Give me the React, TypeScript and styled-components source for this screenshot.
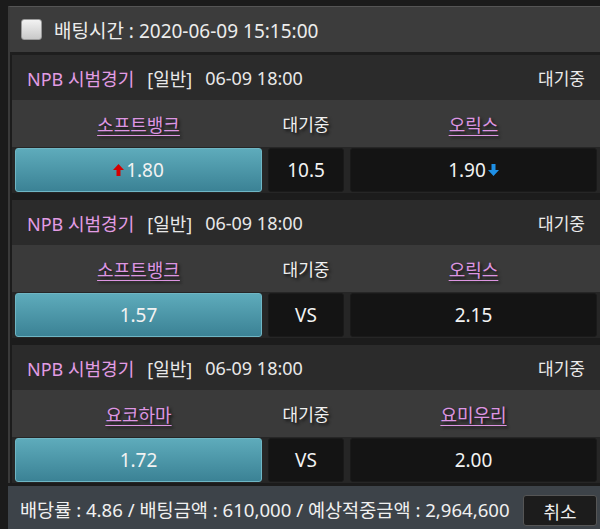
import React from "react";
import styled, { createGlobalStyle } from "styled-components";

const GlobalStyle = createGlobalStyle`
  html, body {
    margin: 0;
    padding: 0;
    background: #1b1b1b;
    overflow: hidden;
  }
  body {
    font-family: "Noto Sans", "Noto Sans CJK KR", sans-serif;
    color: #ececec;
  }
`;

const Page = styled.div`
  padding: 6px 0 0 8px;
  width: 600px;
  box-sizing: border-box;
`;

const Panel = styled.div`
  border-left: 2px solid #3a3a3a;
  border-top: 1px solid #555;
  background: #1c1c1c;
`;

const Header = styled.div`
  display: flex;
  align-items: center;
  gap: 12px;
  height: 45px;
  padding-left: 11px;
  background: #3c3c3c;
  border-bottom: 3px solid #1e1e1e;
  font-size: 19px;
`;

const CheckBox = styled.span`
  width: 21px;
  height: 21px;
  border-radius: 3px;
  border: 1px solid #9a9a9a;
  background: linear-gradient(#f2f2f2, #c9c9c9);
  box-sizing: border-box;
`;

const Games = styled.div`
  padding-left: 2px;
`;

const Game = styled.div`
  margin-bottom: 7px;

  &:last-child {
    margin-bottom: 3px;
  }
`;

const TitleRow = styled.div`
  display: flex;
  align-items: center;
  height: 45px;
  padding: 0 15px;
  background: #2b2b2b;
  font-size: 18px;
`;

const League = styled.span`
  color: #e29ce4;
  margin-right: 13px;
`;

const Plain = styled.span`
  color: #e8e8e8;
  margin-right: 13px;
`;

const Status = styled.span`
  margin-left: auto;
  font-size: 17px;
  color: #ececec;
`;

const Columns = styled.div`
  display: grid;
  grid-template-columns: 1fr 76px 1fr;
  column-gap: 6px;
  padding: 0 3px;
`;

const TeamRow = styled(Columns)`
  height: 47px;
  align-items: center;
  background: #3a3a3a;
  font-size: 18px;
  text-align: center;
`;

const Team = styled.span`
  color: #dd95e2;
  text-decoration: underline;
  text-decoration-thickness: 1px;
  text-underline-offset: 3px;
  text-shadow: 2px 2px 3px #111;
`;

const Draw = styled.span`
  color: #f0f0f0;
  font-size: 17px;
  text-shadow: 2px 2px 3px #111;
`;

const OddsRow = styled(Columns)`
  padding-top: 1px;
  padding-bottom: 1px;
  background: #262626;
`;

const OddsButton = styled.div<{ $selected?: boolean }>`
  display: flex;
  align-items: center;
  justify-content: center;
  gap: 2px;
  height: 44px;
  border-radius: 3px;
  font-size: 19px;
  color: #f2f2f2;
  box-sizing: border-box;
  background: ${(p) =>
    p.$selected ? "linear-gradient(#5eabbb, #3b8295)" : "#141414"};
  border: 1px solid ${(p) => (p.$selected ? "#6fb6c4" : "#1a1a1a")};
`;

const Footer = styled.div`
  display: flex;
  align-items: center;
  padding: 9px 3px 9px 12px;
  background: #3d4349;
  font-size: 18.6px;
  line-height: 1.2;
  color: #f0f0f0;
`;

const CancelButton = styled.button`
  margin-left: auto;
  width: 74px;
  height: 31px;
  border-radius: 3px;
  border: 1px solid #555;
  background: #1c1c1c;
  color: #eee;
  font-family: inherit;
  font-size: 18px;
  padding: 0;
`;

const Arrow = ({ dir }: { dir: "up" | "down" }) => (
  <svg
    width="11"
    height="12"
    viewBox="0 0 11 12"
    style={{ transform: dir === "down" ? "rotate(180deg)" : undefined }}
  >
    <path
      d="M5.5 0 L11 6 H7.5 V12 H3.5 V6 H0 Z"
      fill={dir === "up" ? "#d40000" : "#1e90e6"}
    />
  </svg>
);

type Match = {
  home: string;
  away: string;
  homeOdds: string;
  mid: string;
  awayOdds: string;
  homeArrow?: boolean;
  awayArrow?: boolean;
};

const matches: Match[] = [
  { home: "소프트뱅크", away: "오릭스", homeOdds: "1.80", mid: "10.5", awayOdds: "1.90", homeArrow: true, awayArrow: true },
  { home: "소프트뱅크", away: "오릭스", homeOdds: "1.57", mid: "VS", awayOdds: "2.15" },
  { home: "요코하마", away: "요미우리", homeOdds: "1.72", mid: "VS", awayOdds: "2.00" },
];

const App = () => (
  <Page>
    <GlobalStyle />
    <Panel>
      <Header>
        <CheckBox />
        <span>배팅시간 : 2020-06-09 15:15:00</span>
      </Header>
      <Games>
        {matches.map((m, i) => (
          <Game key={i}>
            <TitleRow>
              <League>NPB 시범경기</League>
              <Plain>[일반]</Plain>
              <Plain>06-09 18:00</Plain>
              <Status>대기중</Status>
            </TitleRow>
            <TeamRow>
              <span>
                <Team>{m.home}</Team>
              </span>
              <Draw>대기중</Draw>
              <span>
                <Team>{m.away}</Team>
              </span>
            </TeamRow>
            <OddsRow>
              <OddsButton $selected>
                {m.homeArrow && <Arrow dir="up" />}
                {m.homeOdds}
              </OddsButton>
              <OddsButton>{m.mid}</OddsButton>
              <OddsButton>
                {m.awayOdds}
                {m.awayArrow && <Arrow dir="down" />}
              </OddsButton>
            </OddsRow>
          </Game>
        ))}
      </Games>
    </Panel>
    <Footer>
      <span>배당률 : 4.86 / 배팅금액 : 610,000 / 예상적중금액 : 2,964,600</span>
      <CancelButton>취소</CancelButton>
    </Footer>
  </Page>
);

export default App;
